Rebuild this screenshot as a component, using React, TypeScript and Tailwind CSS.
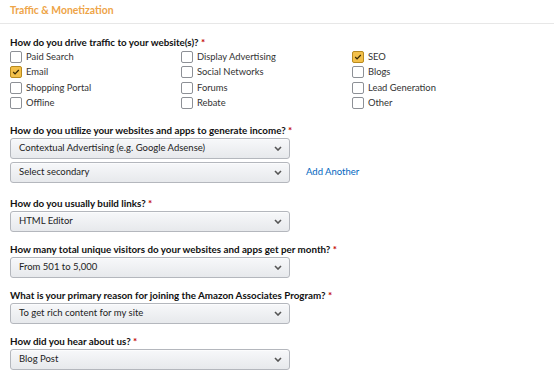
import { useState } from "react";

const traffic: { label: string; checked?: boolean }[][] = [
  [{ label: "Paid Search" }, { label: "Email", checked: true }, { label: "Shopping Portal" }, { label: "Offline" }],
  [{ label: "Display Advertising" }, { label: "Social Networks" }, { label: "Forums" }, { label: "Rebate" }],
  [{ label: "SEO", checked: true }, { label: "Blogs" }, { label: "Lead Generation" }, { label: "Other" }],
];

function Chevron() {
  return (
    <svg viewBox="0 0 8 5" className="h-[5px] w-[8px]" fill="none" stroke="#555" strokeWidth="1.6" aria-hidden>
      <path d="M1 1l3 3 3-3" />
    </svg>
  );
}

function Checkbox({ label, checked }: { label: string; checked?: boolean }) {
  const [on, setOn] = useState(!!checked);
  return (
    <label className="flex h-[15.5px] cursor-pointer items-center gap-[4px]" onClick={() => setOn(!on)}>
      <span
        className={
          on
            ? "flex h-[12px] w-[12px] items-center justify-center rounded-[2px] border border-[#b88a1f] bg-[#f3c04a]"
            : "h-[12px] w-[12px] rounded-[2px] border border-[#8d9096] bg-white"
        }
      >
        {on && (
          <svg viewBox="0 0 10 10" className="h-[8px] w-[8px]" fill="none" stroke="#3a2a05" strokeWidth="1.6" aria-hidden>
            <path d="M1.5 5l2.3 2.3L8.5 2.5" />
          </svg>
        )}
      </span>
      <span className="text-[9.4px] text-[#333]">{label}</span>
    </label>
  );
}

function Select({ value }: { value: string }) {
  return (
    <div className="flex h-[21px] w-[280px] items-center justify-between rounded-[3px] border border-[#b4b7bd] bg-gradient-to-b from-[#f7f8fa] to-[#e7e9ec] pl-[8px] pr-[7px] shadow-[0_1px_0_rgba(255,255,255,0.6)_inset]">
      <span className="text-[9.5px] text-[#222]">{value}</span>
      <Chevron />
    </div>
  );
}

function Label({ children }: { children: string }) {
  return (
    <p className="mb-[1px] h-[14px] text-[9.8px] leading-[14px] font-bold text-[#111]">
      {children} <span className="text-[#c40000]">*</span>
    </p>
  );
}

export default function App() {
  return (
    <div className="h-[387px] w-[554px] overflow-hidden bg-white font-['Lato',sans-serif]">
      <div className="flex h-[24px] items-center border-b border-[#e7e7e7] px-[10px] pb-[2px]">
        <h2 className="text-[10.4px] font-bold text-[#eea447]">Traffic &amp; Monetization</h2>
      </div>

      <div className="px-[10px]">
        <div className="mt-[11px]">
          <p className="h-[14px] text-[9.8px] leading-[14px] font-bold text-[#111]">
            How do you drive traffic to your website(s)? <span className="text-[#c40000]">*</span>
          </p>
          <div className="grid grid-cols-[171px_171px_171px]">
            {traffic.map((col, i) => (
              <div key={i}>
                {col.map((item) => (
                  <Checkbox key={item.label} label={item.label} checked={item.checked} />
                ))}
              </div>
            ))}
          </div>
        </div>

        <div className="mt-[12px]">
          <Label>How do you utilize your websites and apps to generate income?</Label>
          <Select value="Contextual Advertising (e.g. Google Adsense)" />
          <div className="mt-[3px] flex items-center gap-[16px]">
            <Select value="Select secondary" />
            <a href="#" className="text-[9.5px] text-[#0066c0]">Add Another</a>
          </div>
        </div>

        <div className="mt-[13px]">
          <Label>How do you usually build links?</Label>
          <Select value="HTML Editor" />
        </div>

        <div className="mt-[10px]">
          <Label>How many total unique visitors do your websites and apps get per month?</Label>
          <Select value="From 501 to 5,000" />
        </div>

        <div className="mt-[10px]">
          <Label>What is your primary reason for joining the Amazon Associates Program?</Label>
          <Select value="To get rich content for my site" />
        </div>

        <div className="mt-[10px]">
          <Label>How did you hear about us?</Label>
          <Select value="Blog Post" />
        </div>
      </div>
    </div>
  );
}
